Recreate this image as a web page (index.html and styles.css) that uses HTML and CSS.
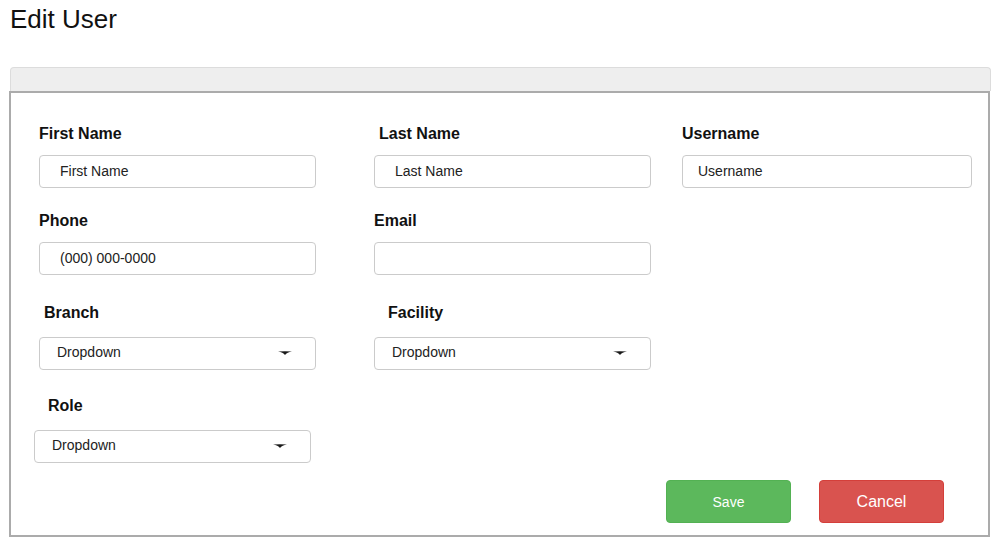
FILE: index.html
```html
<!DOCTYPE html>
<html lang="en">
<head>
<meta charset="utf-8">
<title>Edit User</title>
<link rel="stylesheet" href="styles.css">
</head>
<body>
<div class="page">
  <h1 class="title">Edit User</h1>
  <div class="panel">
    <div class="panel-head"></div>
    <div class="panel-body">
      <div class="row row-first">
        <div class="field">
          <label class="label">First Name</label>
          <input class="input" type="text" placeholder="First Name">
        </div>
        <div class="field">
          <label class="label label-shift">Last Name</label>
          <input class="input" type="text" placeholder="Last Name">
        </div>
        <div class="field">
          <label class="label">Username</label>
          <input class="input input-narrowpad input-wide" type="text" placeholder="Username">
        </div>
      </div>
      <div class="row row-second">
        <div class="field">
          <label class="label">Phone</label>
          <input class="input" type="text" placeholder="(000) 000-0000">
        </div>
        <div class="field">
          <label class="label">Email</label>
          <input class="input" type="text">
        </div>
      </div>
      <div class="row row-select row-third">
        <div class="field">
          <label class="label label-shift">Branch</label>
          <div class="select"><span>Dropdown</span><svg class="caret" width="14" height="4" viewBox="0 0 14 4"><path d="M0 0.6 Q7 -0.3 14 0.6 Q9 1.5 7 4 Q5 1.5 0 0.6Z"/></svg></div>
        </div>
        <div class="field">
          <label class="label label-shift-lg">Facility</label>
          <div class="select"><span>Dropdown</span><svg class="caret" width="14" height="4" viewBox="0 0 14 4"><path d="M0 0.6 Q7 -0.3 14 0.6 Q9 1.5 7 4 Q5 1.5 0 0.6Z"/></svg></div>
        </div>
      </div>
      <div class="row row-select row-fourth">
        <div class="field field-outdent">
          <label class="label label-shift-lg">Role</label>
          <div class="select"><span>Dropdown</span><svg class="caret" width="14" height="4" viewBox="0 0 14 4"><path d="M0 0.6 Q7 -0.3 14 0.6 Q9 1.5 7 4 Q5 1.5 0 0.6Z"/></svg></div>
        </div>
      </div>
      <div class="actions">
        <button class="btn btn-save" type="button">Save</button>
        <button class="btn btn-cancel" type="button">Cancel</button>
      </div>
    </div>
  </div>
</div>
</body>
</html>
```
FILE: styles.css
```css
* { box-sizing: border-box; }
html, body { margin: 0; padding: 0; background: #fff; }
body { font-family: "Liberation Sans", Arial, sans-serif; color: #111; }

.page { padding: 4px 0 0 9px; width: 1002px; }

.title {
  margin: 0 0 0 1px;
  font-size: 26px;
  font-weight: normal;
  line-height: 30px;
  color: #111;
}

.panel { margin-top: 33px; width: 982px; }

.panel-head {
  margin-left: 1px;
  width: 981px;
  height: 24px;
  background: #eee;
  border: 1px solid #dcdcdc;
  border-bottom: none;
  border-radius: 4px 4px 0 0;
}

.panel-body {
  width: 981px;
  border: 2px solid #ababab;
  padding: 32px 0 12px 28px;
}

.row {
  display: grid;
  grid-template-columns: 335px 308px 290px;
}
.row-second { margin-top: 24px; }
.row-third { margin-top: 29px; }
.row-fourth { margin-top: 27px; }

.field { display: flex; flex-direction: column; align-items: flex-start; }
.field-outdent { margin-left: -5px; }

.label {
  font-size: 16px;
  font-weight: bold;
  line-height: 18px;
  color: #111;
  margin-bottom: 12px;
}
.row-select .label { margin-bottom: 15px; }
.label-shift { margin-left: 5px; }
.label-shift-lg { margin-left: 14px; }

.input {
  width: 277px;
  height: 33px;
  border: 1px solid #cbcbcb;
  border-radius: 4px;
  padding: 0 0 1px 20px;
  font-family: "Liberation Sans", Arial, sans-serif;
  font-size: 14px;
  color: #222;
  background: #fff;
  outline: none;
}
.input::placeholder { color: #222; opacity: 1; }
.input-narrowpad { padding-left: 15px; }
.input-wide { width: 290px; }

.select {
  width: 277px;
  height: 33px;
  border: 1px solid #cbcbcb;
  border-radius: 4px;
  padding: 0 23px 3px 17px;
  display: flex;
  align-items: center;
  justify-content: space-between;
  font-size: 14px;
  color: #222;
}
.caret { fill: #1a1a1a; margin-top: 1px; }

.actions {
  display: flex;
  justify-content: flex-end;
  gap: 28px;
  margin-top: 17px;
  padding-right: 44px;
}

.btn {
  width: 125px;
  height: 43px;
  border-radius: 4px;
  color: #fff;
  font-family: "Liberation Sans", Arial, sans-serif;
  cursor: pointer;
}
.btn-save { background: #5cb85c; border: 1px solid #53b153; font-size: 14px; }
.btn-cancel { background: #d9534f; border: 1px solid #d43f3a; font-size: 16px; }
```
